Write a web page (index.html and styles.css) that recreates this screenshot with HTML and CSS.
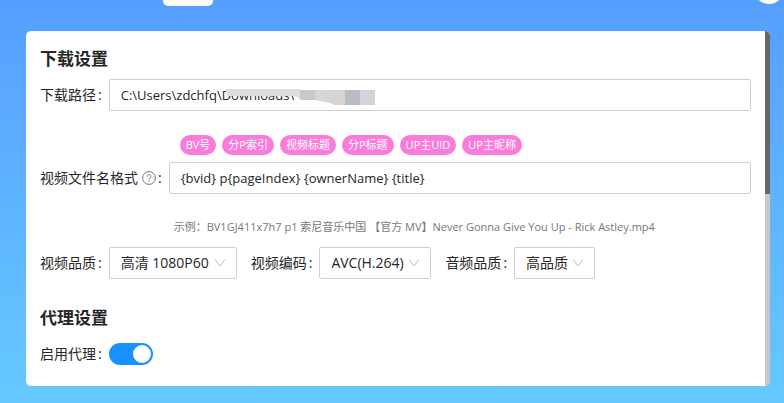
FILE: index.html
```
<!DOCTYPE html>
<html lang="zh-CN">
<head>
	<meta charset="UTF-8">
	<title>下载设置</title>
	<link rel="stylesheet" href="styles.css">
</head>
<body>
	<header class="header">
		<div class="tab"></div>
		<div class="avatar"></div>
	</header>
	<main class="card">
		<form class="content">
			<h2 class="title">下载设置</h2>
			<div class="row">
				<label class="label" for="path">下载路径</label>
				<div class="field">
					<input class="input" id="path" type="text" value="C:\Users\zdchfq\Downloads\">
					<svg class="mask" width="150" height="16" viewBox="0 0 150 16">
						<path fill="#dededc" d="M0 0h75v10l-5-3H2z"/>
						<path fill="#c8c9ca" d="M75 1h15v10H75z"/>
						<path fill="#d6d6d6" d="M90 1h15v13l-15-3z"/>
						<path fill="#d9d4d0" d="M105 1h15v15h-10l-5-2z"/>
						<path fill="#b9bdc1" d="M120 1h15v15h-15z"/>
						<path fill="#d3d4da" d="M135 1h15v15h-15z"/>
					</svg>
				</div>
			</div>
			<div class="format">
				<label class="label" for="format">视频文件名格式<svg class="help" width="14" height="14" viewBox="0 0 14 14" fill="none" stroke="#777">
					<circle cx="7" cy="7" r="6.4"/>
					<path d="M5 5.7C5 3 9 3 9 5.6c0 1.4-2 1.4-2 2.9M7 9.5v1.2"/>
				</svg></label>
				<input class="input" id="format" type="text" value="{bvid} p{pageIndex} {ownerName} {title}">
				<div class="tags">
					<button class="tag" type="button">BV号</button>
					<button class="tag" type="button">分P索引</button>
					<button class="tag" type="button">视频标题</button>
					<button class="tag" type="button">分P标题</button>
					<button class="tag" type="button">UP主UID</button>
					<button class="tag" type="button">UP主昵称</button>
				</div>
				<p class="example">示例：BV1GJ411x7h7 p1 索尼音乐中国 【官方 MV】Never Gonna Give You Up - Rick Astley.mp4</p>
			</div>
			<div class="row selects">
				<div class="item">
					<label class="label" for="quality">视频品质</label>
					<div class="select">
						<select id="quality"><option>高清 1080P60</option></select>
						<svg class="arrow" width="12" height="12" viewBox="0 0 12 12" fill="none" stroke="#bfbfbf"><path d="M1 2.5l5 6.5 5-6.5"/></svg>
					</div>
				</div>
				<div class="item">
					<label class="label" for="codec">视频编码</label>
					<div class="select">
						<select id="codec"><option>AVC(H.264)</option></select>
						<svg class="arrow" width="12" height="12" viewBox="0 0 12 12" fill="none" stroke="#bfbfbf"><path d="M1 2.5l5 6.5 5-6.5"/></svg>
					</div>
				</div>
				<div class="item">
					<label class="label" for="audio">音频品质</label>
					<div class="select">
						<select id="audio"><option>高品质</option></select>
						<svg class="arrow" width="12" height="12" viewBox="0 0 12 12" fill="none" stroke="#bfbfbf"><path d="M1 2.5l5 6.5 5-6.5"/></svg>
					</div>
				</div>
			</div>
			<h2 class="title">代理设置</h2>
			<div class="row">
				<label class="label" for="proxy">启用代理</label>
				<input class="switch" id="proxy" type="checkbox" role="switch" checked>
			</div>
		</form>
		<div class="scrollbar"><div class="thumb"></div></div>
	</main>
</body>
</html>
```

FILE: styles.css
```
*{
	margin: 0;
	padding: 0;
	box-sizing: border-box;
}
html{
	min-height: 100%;
	background: linear-gradient(#569eff, #66c9ff);
}
body{
	font: 14px/22px "Open Sans", "Noto Sans CJK SC", sans-serif;
	color: #262626;
}
input,
select,
button{
	font: inherit;
	color: inherit;
}
.header{
	display: flex;
	justify-content: space-between;
	height: 31px;
	padding-left: 163px;
	overflow: hidden;
}
.tab{
	width: 50px;
	height: 6px;
	border-radius: 0 0 5px 5px;
	background: #fff;
}
.avatar{
	width: 30px;
	height: 30px;
	margin-top: -26px;
	border-radius: 50%;
	background: #fffef8;
}
.card{
	display: flex;
	margin: 0 14px 17px 26px;
	border-radius: 5px;
	background: #fff;
	overflow: hidden;
}
.content{
	flex: 1;
	min-width: 0;
	padding: 16px 14px;
}
.scrollbar{
	width: 5px;
	background: #c8c8c8;
}
.thumb{
	height: 46%;
	background: #666;
}
.title{
	margin-bottom: 8px;
	font-size: 17px;
	line-height: 24px;
	font-weight: 700;
}
.row{
	display: flex;
	align-items: center;
	min-height: 32px;
}
.label{
	display: flex;
	align-items: center;
	white-space: nowrap;
}
.label::after{
	content: ":";
	margin: 0 7px 0 2px;
}
.help{
	margin-left: 4px;
}
.field{
	position: relative;
	flex: 1;
}
.input{
	width: 100%;
	height: 32px;
	padding: 0 11px;
	border: 1px solid #d0d0d0;
	border-radius: 2px;
	background: #fff;
	font-size: 13px;
}
/* 路径打码 */
.mask{
	position: absolute;
	left: 116px;
	top: 10px;
}
.format{
	display: grid;
	grid-template-columns: auto 1fr;
	grid-template-areas:
		". tags"
		"label input"
		". example";
	margin-top: 24px;
}
.format .label{
	grid-area: label;
}
.format .input{
	grid-area: input;
}
.tags{
	grid-area: tags;
	display: flex;
	gap: 6px;
	padding: 0 11px 7px;
}
.tag{
	height: 20px;
	padding: 0 6px;
	border: 0;
	border-radius: 10px;
	background: #fb7bdb;
	color: #fff;
	font-size: 11px;
	line-height: 20px;
}
.example{
	grid-area: example;
	margin-top: 22px;
	padding-left: 5px;
	color: #777;
	font-size: 11px;
	white-space: nowrap;
}
.selects{
	gap: 14px;
	margin: 9px 0 27px;
}
.item{
	display: flex;
	align-items: center;
}
.select{
	position: relative;
}
.select select{
	display: block;
	height: 32px;
	padding: 0 26px 0 11px;
	border: 1px solid #d0d0d0;
	border-radius: 2px;
	background: #fff;
	appearance: none;
}
.arrow{
	position: absolute;
	right: 11px;
	top: 10px;
	pointer-events: none;
}
.switch{
	display: flex;
	width: 44px;
	height: 22px;
	padding: 2px;
	border-radius: 11px;
	background: #999;
	appearance: none;
}
.switch::before{
	content: "";
	width: 18px;
	height: 18px;
	border-radius: 50%;
	background: #fff;
}
.switch:checked{
	justify-content: flex-end;
	background: #1890ff;
}
```
